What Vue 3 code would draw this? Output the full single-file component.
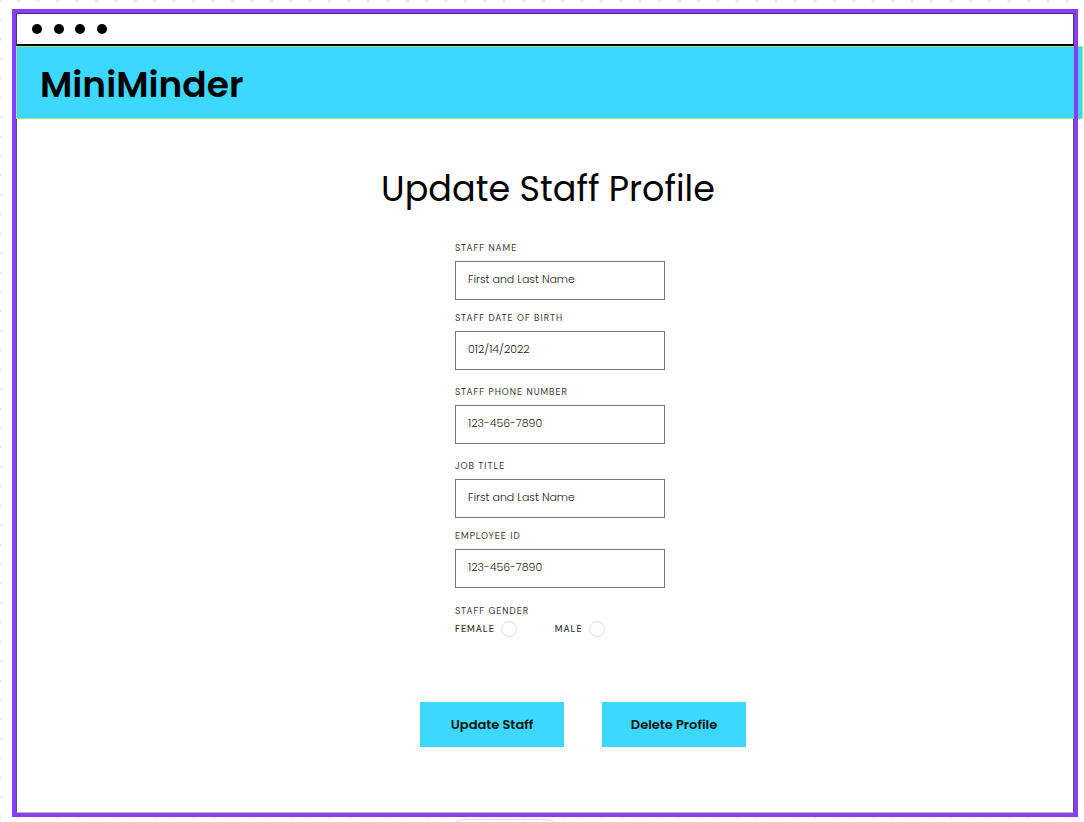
<script setup>
import { reactive } from 'vue'

const fields = reactive([
  { id: 'name', label: 'Staff Name', value: 'First and Last Name' },
  { id: 'birth', label: 'Staff Date of Birth', value: '012/14/2022' },
  { id: 'phone', label: 'Staff Phone Number', value: '123-456-7890', spaced: true },
  { id: 'job', label: 'Job Title', value: 'First and Last Name', spaced: true },
  { id: 'employee', label: 'Employee ID', value: '123-456-7890' }
])
</script>

<template>
  <div class="canvas">
    <div class="window">
      <div class="titlebar">
        <div class="dots"><i></i><i></i><i></i><i></i></div>
      </div>
      <header class="brand">MiniMinder</header>
      <main>
        <h1>Update Staff Profile</h1>
        <form @submit.prevent>
          <div class="fields">
            <div v-for="f in fields" :key="f.id" class="field" :class="{ spaced: f.spaced }">
              <label :for="f.id">{{ f.label }}</label>
              <input :id="f.id" v-model="f.value" type="text" />
            </div>
            <fieldset>
              <legend>Staff Gender</legend>
              <div class="options">
                <label class="option" for="female">Female <input id="female" type="radio" name="gender" value="female" /></label>
                <label class="option" for="male">Male <input id="male" type="radio" name="gender" value="male" /></label>
              </div>
            </fieldset>
          </div>
          <div class="actions">
            <button type="submit">Update Staff</button>
            <button type="button">Delete Profile</button>
          </div>
        </form>
      </main>
    </div>
    <div class="pill"></div>
  </div>
</template>

<style>
body {
  margin: 0;
}
</style>

<style scoped>
* {
  box-sizing: border-box;
}
.canvas {
  position: relative;
  display: flex;
  min-height: 100vh;
  padding: 9px 6px 5px 12px;
  overflow: hidden;
  font-family: Poppins, Inter, "Open Sans", sans-serif;
  color: #000;
  background: #fff radial-gradient(circle, #ebebf0 0 2px, transparent 2px) 9px -9px / calc(136px / 7) calc(136px / 7);
}
.window {
  position: relative;
  display: flex;
  flex: 1;
  flex-direction: column;
  min-width: 0;
  padding: 4px;
  background: #fff;
}
.window::after {
  content: "";
  position: absolute;
  inset: 0;
  border: 4px solid #8b3dff;
  pointer-events: none;
}
.titlebar {
  display: flex;
  align-items: center;
  height: 33px;
  padding: 0 15px;
  border: 1px solid #444;
  border-top-color: #4b2a80;
  border-bottom: 2px solid #000;
}
.dots {
  display: flex;
  justify-content: space-between;
  width: 75px;
}
.dots i {
  width: 10px;
  height: 10px;
  border-radius: 50%;
  background: #000;
}
.brand {
  height: 73px;
  margin-right: -9px;
  padding-left: 23px;
  border: 1px solid #a5e58c;
  background: #3dd8ff;
  font-size: 36px;
  font-weight: 600;
  line-height: 75px;
}
main {
  flex: 1;
  padding: 46px 0 64px;
  border: 1px solid #555;
  border-top: 0;
  border-bottom-color: #bbb;
}
h1 {
  margin: 0;
  padding-left: 6px;
  font-size: 35px;
  font-weight: 400;
  line-height: 48px;
  text-align: center;
}
form {
  display: flex;
  flex-direction: column;
  align-items: center;
}
.fields {
  display: flex;
  flex-direction: column;
  gap: 12px;
  width: 210px;
  margin-top: 29px;
  padding-left: 30px;
  box-sizing: content-box;
}
.field {
  display: flex;
  flex-direction: column;
  gap: 7px;
}
.spaced {
  margin-top: 4px;
}
label,
legend {
  color: #333;
  font-family: "DM Sans", Poppins, Inter, sans-serif;
  font-size: 9px;
  font-optical-sizing: none;
  line-height: 12px;
  letter-spacing: 1px;
  text-transform: uppercase;
}
input[type="text"] {
  width: 100%;
  height: 39px;
  padding: 0 12px 2px;
  border: 1px solid #777;
  border-radius: 0;
  background: #fff;
  color: #222;
  font: inherit;
  font-size: 11px;
  font-weight: 300;
}
fieldset {
  min-width: 0;
  margin: 5px 0 0;
  padding: 0;
  border: 0;
}
legend {
  padding: 0;
}
.options {
  display: flex;
  gap: 38px;
  margin-top: 4px;
}
.option {
  display: flex;
  align-items: center;
  gap: 6px;
  font-weight: 500;
}
input[type="radio"] {
  appearance: none;
  width: 16px;
  height: 16px;
  margin: 0;
  border: 1px solid #ddd;
  border-radius: 50%;
}
.actions {
  display: flex;
  gap: 38px;
  margin-top: 65px;
  padding-left: 76px;
}
button {
  width: 144px;
  height: 45px;
  padding: 0;
  border: 0;
  background: #3dd8ff;
  color: #111;
  font: inherit;
  font-size: 13px;
  font-weight: 600;
}
.pill {
  position: absolute;
  bottom: -37px;
  left: 50%;
  width: 120px;
  height: 40px;
  margin-left: -97px;
  border: 1px solid #dcdce2;
  border-radius: 20px;
  background: #fff;
}
</style>
